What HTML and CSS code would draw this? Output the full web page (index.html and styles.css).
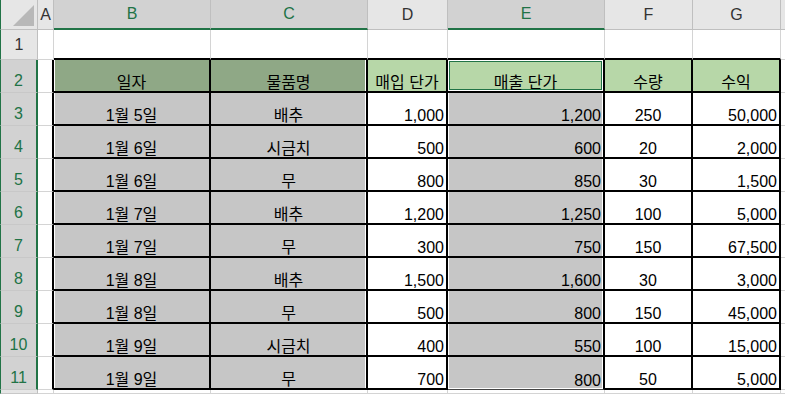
FILE: index.html
```html
<!DOCTYPE html>
<html lang="ko">
<head>
<meta charset="utf-8">
<title>Sheet</title>
<link rel="stylesheet" href="styles.css">
</head>
<body>
<div class="sheet">
  <div class="corner"><span class="tri"></span></div>
  <div class="ch">A</div>
  <div class="ch sel">B</div>
  <div class="ch sel">C</div>
  <div class="ch">D</div>
  <div class="ch sel">E</div>
  <div class="ch">F</div>
  <div class="ch">G</div>
  <div class="ch"></div>

  <div class="rh r1">1</div>
  <div class="c"></div>
  <div class="c tt"></div>
  <div class="c tt"></div>
  <div class="c tt"></div>
  <div class="c tt"></div>
  <div class="c tt"></div>
  <div class="c tt"></div>
  <div class="c"></div>

  <div class="rh sel">2</div>
  <div class="c tl"></div>
  <div class="c t ctr dk selB">일자</div>
  <div class="c t ctr dk selC">물품명</div>
  <div class="c t ctr lg">매입 단가</div>
  <div class="c t ctr lg act">매출 단가</div>
  <div class="c t ctr lg">수량</div>
  <div class="c t ctr lg">수익</div>
  <div class="c"></div>

  <div class="rh sel">3</div>
  <div class="c tl"></div>
  <div class="c t ctr gr selB">1월 5일</div>
  <div class="c t ctr gr selC">배추</div>
  <div class="c t rt">1,000</div>
  <div class="c t rt gr selE">1,200</div>
  <div class="c t ctr">250</div>
  <div class="c t rt">50,000</div>
  <div class="c"></div>

  <div class="rh sel">4</div>
  <div class="c tl"></div>
  <div class="c t ctr gr selB">1월 6일</div>
  <div class="c t ctr gr selC">시금치</div>
  <div class="c t rt">500</div>
  <div class="c t rt gr selE">600</div>
  <div class="c t ctr">20</div>
  <div class="c t rt">2,000</div>
  <div class="c"></div>

  <div class="rh sel">5</div>
  <div class="c tl"></div>
  <div class="c t ctr gr selB">1월 6일</div>
  <div class="c t ctr gr selC">무</div>
  <div class="c t rt">800</div>
  <div class="c t rt gr selE">850</div>
  <div class="c t ctr">30</div>
  <div class="c t rt">1,500</div>
  <div class="c"></div>

  <div class="rh sel">6</div>
  <div class="c tl"></div>
  <div class="c t ctr gr selB">1월 7일</div>
  <div class="c t ctr gr selC">배추</div>
  <div class="c t rt">1,200</div>
  <div class="c t rt gr selE">1,250</div>
  <div class="c t ctr">100</div>
  <div class="c t rt">5,000</div>
  <div class="c"></div>

  <div class="rh sel">7</div>
  <div class="c tl"></div>
  <div class="c t ctr gr selB">1월 7일</div>
  <div class="c t ctr gr selC">무</div>
  <div class="c t rt">300</div>
  <div class="c t rt gr selE">750</div>
  <div class="c t ctr">150</div>
  <div class="c t rt">67,500</div>
  <div class="c"></div>

  <div class="rh sel">8</div>
  <div class="c tl"></div>
  <div class="c t ctr gr selB">1월 8일</div>
  <div class="c t ctr gr selC">배추</div>
  <div class="c t rt">1,500</div>
  <div class="c t rt gr selE">1,600</div>
  <div class="c t ctr">30</div>
  <div class="c t rt">3,000</div>
  <div class="c"></div>

  <div class="rh sel">9</div>
  <div class="c tl"></div>
  <div class="c t ctr gr selB">1월 8일</div>
  <div class="c t ctr gr selC">무</div>
  <div class="c t rt">500</div>
  <div class="c t rt gr selE">800</div>
  <div class="c t ctr">150</div>
  <div class="c t rt">45,000</div>
  <div class="c"></div>

  <div class="rh sel">10</div>
  <div class="c tl"></div>
  <div class="c t ctr gr selB">1월 9일</div>
  <div class="c t ctr gr selC">시금치</div>
  <div class="c t rt">400</div>
  <div class="c t rt gr selE">550</div>
  <div class="c t ctr">100</div>
  <div class="c t rt">15,000</div>
  <div class="c"></div>

  <div class="rh sel">11</div>
  <div class="c tl"></div>
  <div class="c t ctr gr selB">1월 9일</div>
  <div class="c t ctr gr selC">무</div>
  <div class="c t rt">700</div>
  <div class="c t rt gr selE lastE">800</div>
  <div class="c t ctr">50</div>
  <div class="c t rt">5,000</div>
  <div class="c"></div>

  <div class="rh"></div>
  <div class="c"></div>
  <div class="c"></div>
  <div class="c"></div>
  <div class="c"></div>
  <div class="c"></div>
  <div class="c"></div>
  <div class="c"></div>
  <div class="c"></div>
</div>
</body>
</html>
```

FILE: styles.css
```css
html, body {
  margin: 0;
  padding: 0;
  background: #fff;
}

body {
  width: 785px;
  height: 394px;
  overflow: hidden;
  font-family: "Liberation Sans", "Noto Sans CJK KR", sans-serif;
  font-size: 16px;
  color: #000;
}

.sheet {
  display: grid;
  grid-template-columns: 38px 16px 157px 157px 80px 157px 88px 88px 1fr;
  grid-template-rows: 30px 30px repeat(10, 33px) 1fr;
  height: 394px;
}

.sheet > div {
  box-sizing: border-box;
  display: flex;
  line-height: 16px;
  white-space: nowrap;
  min-width: 0;
}

.corner {
  background: #e6e6e6;
  border-left: 1px solid #217346;
  border-right: 1px solid #bfbfbf;
  border-bottom: 1px solid #bfbfbf;
  align-items: flex-end;
  justify-content: flex-end;
  padding: 0 3px 3px 0;
}

.tri {
  width: 0;
  height: 0;
  border-left: 21px solid transparent;
  border-bottom: 21px solid #b8b8b8;
}

.ch {
  background: #e6e6e6;
  border-right: 1px solid #bfbfbf;
  border-bottom: 1px solid #bfbfbf;
  align-items: center;
  justify-content: center;
  color: #333;
}

.ch.sel {
  background: #d2d2d2;
  color: #217346;
  border-bottom: 2px solid #217346;
}

.rh {
  background: #e6e6e6;
  border-left: 1px solid #217346;
  border-right: 1px solid #bfbfbf;
  border-bottom: 1px solid #c8c8c8;
  align-items: flex-end;
  justify-content: center;
  padding-bottom: 3px;
  color: #333;
}

.rh.sel {
  background: #d2d2d2;
  color: #217346;
  border-right: 2px solid #217346;
}

.rh.r1 {
  padding-bottom: 6px;
}

.c {
  background: #fff;
  border-right: 1px solid #d4d4d4;
  border-bottom: 1px solid #d4d4d4;
  align-items: flex-end;
  padding: 0 2px;
}

.tt {
  border-bottom: 2px solid #000;
}

.tl {
  border-right: 2px solid #000;
}

.t {
  border-right: 2px solid #000;
  border-bottom: 2px solid #000;
}

.ctr {
  justify-content: center;
}

.rt {
  justify-content: flex-end;
}

.sheet > .gr {
  background: #c6c6c6;
}

.sheet > .dk {
  background: #8fa886;
}

.sheet > .lg {
  background: #b7d7a8;
}

.selB {
  box-shadow: inset 1px 0 #fff;
}

.selC {
  box-shadow: inset -1px 0 #fff;
}

.selE {
  box-shadow: inset 1px 0 #fff, inset -1px 0 #fff;
}

.lastE {
  border-bottom: 1px solid #444;
  box-shadow: inset 1px 0 #fff, inset -1px 0 #fff, inset 0 -1px #fff;
}

.act {
  box-shadow: inset 0 0 0 1px #fff, inset 0 0 0 2px #217346;
}
```
